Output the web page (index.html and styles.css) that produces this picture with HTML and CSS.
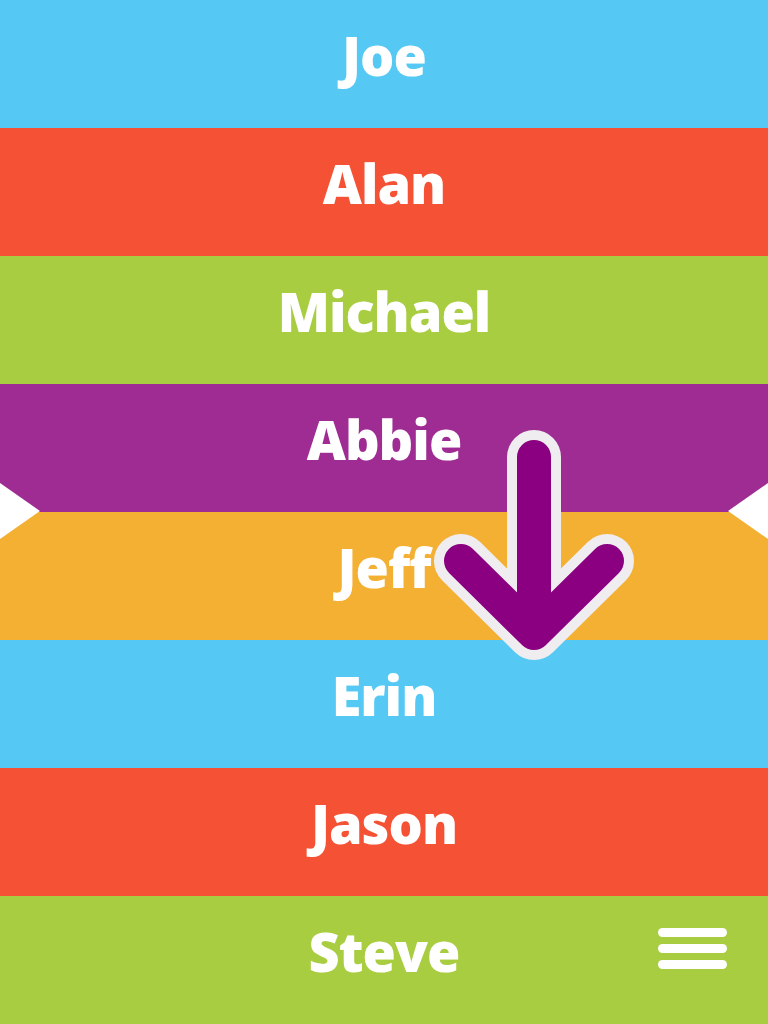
FILE: index.html
```html
<!DOCTYPE html>
<html>
<head>
<meta charset="utf-8">
<link rel="stylesheet" href="styles.css">
</head>
<body>
<div class="list">
  <div class="row blue">Joe</div>
  <div class="row red">Alan</div>
  <div class="row green">Michael</div>
  <div class="row purple">Abbie</div>
  <div class="row orange">Jeff</div>
  <div class="row blue">Erin</div>
  <div class="row red">Jason</div>
  <div class="row green">Steve</div>
</div>
<div class="marker marker-left"></div>
<div class="marker marker-right"></div>
<svg class="arrow" width="768" height="1024" viewBox="0 0 768 1024">
  <path d="M534 457 L534 633 M461 561 L534 633 L607 561" fill="none" stroke="#efedf0" stroke-width="54" stroke-linecap="round" stroke-linejoin="round"/>
  <path d="M534 457 L534 633 M461 561 L534 633 L607 561" fill="none" stroke="#8b0081" stroke-width="34" stroke-linecap="round" stroke-linejoin="round"/>
</svg>
<div class="menu">
  <span class="bar"></span>
  <span class="bar"></span>
  <span class="bar"></span>
</div>
</body>
</html>
```
FILE: styles.css
```css
html, body {
  margin: 0;
  padding: 0;
  width: 768px;
  height: 1024px;
  overflow: hidden;
}
body {
  position: relative;
  font-family: "Open Sans", "DejaVu Sans", sans-serif;
}
.list {
  display: flex;
  flex-direction: column;
}
.row {
  height: 128px;
  box-sizing: border-box;
  padding-bottom: 18px;
  display: flex;
  align-items: center;
  justify-content: center;
  color: #fff;
  font-weight: 800;
  font-size: 54px;
  letter-spacing: -1px;
}
.blue { background: #55c9f4; }
.red { background: #f55134; }
.green { background: #a8cd41; }
.purple { background: #9f2c93; }
.orange { background: #f3b033; }
.marker {
  position: absolute;
  top: 483px;
  width: 0;
  height: 0;
  border-top: 28px solid transparent;
  border-bottom: 28px solid transparent;
}
.marker-left {
  left: 0;
  border-left: 40px solid #fff;
}
.marker-right {
  right: 0;
  border-right: 40px solid #fff;
}
.arrow {
  position: absolute;
  left: 0;
  top: 0;
}
.menu {
  position: absolute;
  left: 658px;
  top: 928px;
  width: 69px;
  display: flex;
  flex-direction: column;
  gap: 7px;
}
.bar {
  display: block;
  height: 9px;
  border-radius: 5px;
  background: #fff;
}
```
